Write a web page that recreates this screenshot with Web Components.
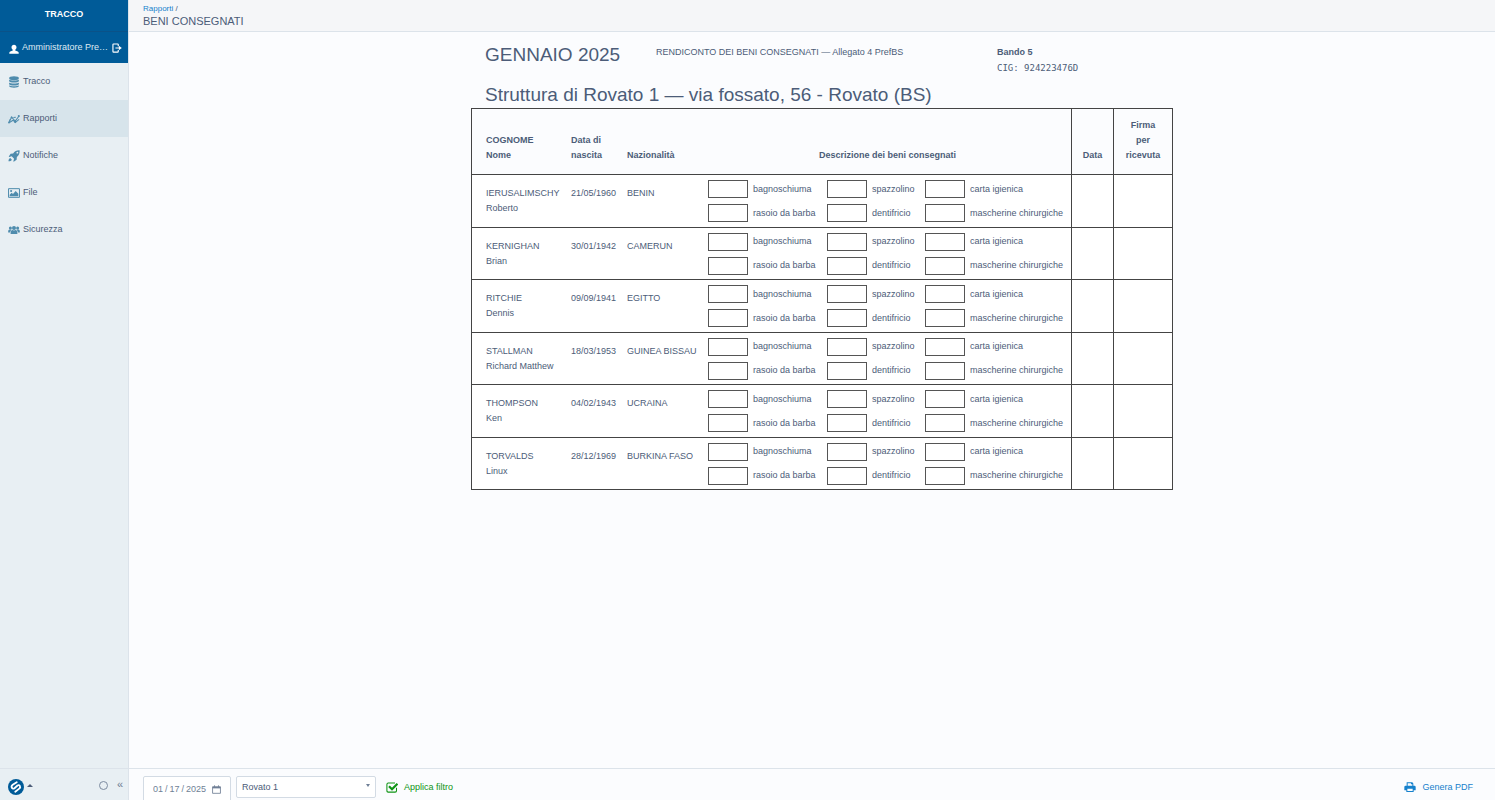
<!DOCTYPE html>
<html lang="it">
<head>
<meta charset="utf-8">
<meta name="viewport" content="width=device-width, initial-scale=1">
<title>Tracco - Beni consegnati</title>
<style>
html, body { height: 100%; margin: 0; }
body {
  --ink: #4c5c78; --line: #dce3ea; --link: #1681cc; --brand: #005b98; --icon: #4f8cad;
  font: 9px/15px "Liberation Sans", Arial, Helvetica, sans-serif;
  color: var(--ink); background: #fbfcfe; overflow: hidden;
}
</style>
</head>
<body>
<app-shell>
  <side-nav slot="nav" user="Amministratore Pre…">
    <nav-item icon="database">Tracco</nav-item>
    <nav-item icon="chart" active>Rapporti</nav-item>
    <nav-item icon="rocket">Notifiche</nav-item>
    <nav-item icon="picture">File</nav-item>
    <nav-item icon="group">Sicurezza</nav-item>
  </side-nav>
  <page-header slot="header" parent="Rapporti">BENI CONSEGNATI</page-header>
  <report-sheet></report-sheet>
  <filter-bar slot="footer"></filter-bar>
</app-shell>

<script>
const ICONS = {
  user: ['0 0 16 16', '<path fill="currentColor" d="M8 1c2.300 0 4 1.700 4 4.200 0 1.800-.8 3.200-2 4v1.200l4 1.600c.9.400 1.500 1 1.500 2V15.500H.5V14c0-1 .6-1.600 1.500-2l4-1.600V9.200c-1.200-.8-2-2.200-2-4C4 2.700 5.700 1 8 1z"/>'],
  logout: ['0 0 16 16', '<path fill="none" stroke="currentColor" stroke-width="1.800" d="M10 5V2.500Q10 1.500 9 1.500H2.500Q1.500 1.500 1.500 2.500v11Q1.500 14.500 2.500 14.500H9Q10 14.500 10 13.500V11M5.500 8H12"/><path fill="currentColor" d="M11 4.500 15.700 8 11 11.500z"/>'],
  database: ['0 0 16 16', '<g fill="currentColor"><ellipse cx="8" cy="3" rx="6.500" ry="2.600"/><path d="M1.500 4.700c1.500 1.700 11.500 1.700 13 0v1.800c0 3-13 3-13 0zM1.500 8.700c1.500 1.700 11.500 1.700 13 0v1.800c0 3-13 3-13 0zM1.500 12.400c1.500 1.700 11.500 1.700 13 0v.9c0 3-13 3-13 0z"/></g>'],
  chart: ['0 0 20 16', '<g fill="none" stroke="currentColor" stroke-width="1.700"><path d="M1.500 14 6 5l6 6.500 6.500-8.500"/><path d="M3 13.500 8.500 10l3.500 4 6.500-5.500M2 10.500l2-1.500M9 5.500l4-.5"/></g><g fill="currentColor"><circle cx="1.700" cy="13.800" r="1.600"/><circle cx="6" cy="5.300" r="1.600"/><circle cx="12" cy="12.500" r="1.800"/><circle cx="18" cy="3" r="1.700"/></g>'],
  rocket: ['0 0 16 16', '<path fill="currentColor" fill-rule="evenodd" d="M15.500.5c.2 4-1 6.500-3.700 8.800l-.3 3.700-3.800 2.500-.6-.6 1-3.300-3.200-3.200-3.300 1-.6-.6L3.500 5l3.300-.4C9 1.700 11.700.3 15.500.5zM12.500 2.400a1.200 1.200 0 1 0 0 2.400 1.200 1.200 0 0 0 0-2.400zM3 10.800 5.200 13c-.8 1.600-2.400 2-4.500 2 0-2.100.6-3.600 2.300-4.200z"/>'],
  picture: ['0 0 18 16', '<path fill="none" stroke="currentColor" stroke-width="1.500" d="M.8 1.500h16.400v13H.8z"/><path fill="currentColor" d="M2.500 12.800V10.500l3-3 2 2 4-4.500 4 4v3.800z"/><circle cx="4.700" cy="5" r="1.600" fill="currentColor"/>'],
  group: ['0 0 20 16', '<g fill="currentColor"><circle cx="4" cy="4.500" r="2.500"/><circle cx="16" cy="4.500" r="2.500"/><path d="M.3 12V9.500Q.5 7 2.500 7h3Q4.500 9 3.500 12zM19.700 12V9.500Q19.500 7 17.500 7h-3Q15.500 9 16.500 12z"/><circle cx="10" cy="4.800" r="3.400"/><path d="M4.300 14.500q0-6 3-6.500 2.700 1.500 5.400 0 3 .5 3 6.500z"/></g>'],
  logo: ['0 0 32 32', '<circle cx="16" cy="16" r="16" fill="#005b98"/><path fill="none" stroke="#fff" stroke-width="3.600" stroke-linecap="round" d="M17.500 6.500 9.500 11.500c-5 3.500-1 10 3.500 7l6-5.500c4-3 7.500 3 3.500 6.200L14.500 25.500"/>'],
  check: ['0 0 16 16', '<path fill="none" stroke="currentColor" stroke-width="1.400" d="M14 9v4q0 1.800-1.800 1.800H3Q1.200 14.800 1.200 13V4.500Q1.200 2.700 3 2.700h9"/><path fill="none" stroke="currentColor" stroke-width="3" d="m4 7 4 4 7.300-7.300"/>'],
  print: ['0 0 18 16', '<path fill="currentColor" fill-rule="evenodd" d="M4 6V1h8.500L14 2.800V6h1.500q2 0 2 2v5H14.500v2.500h-11V13H.5V8q0-2 2-2zM5.500 2.500V6h7V4h-2V2.500zM5 10.500V14h8v-3.500z"/>'],
  calendar: ['0 0 16 16', '<path fill="none" stroke="currentColor" stroke-width="1.500" d="M1 3.200h14v11.600H1zM4.500.5v3M11.500.5v3"/><path fill="currentColor" d="M1 3h14v3H1z"/>']
};

class BaseElement extends HTMLElement {
  constructor() { super(); this.attachShadow({ mode: 'open' }); }
  connectedCallback() { this.shadowRoot.innerHTML = this.render(); }
}

customElements.define('ui-icon', class extends BaseElement {
  render() {
    const [box, body] = ICONS[this.getAttribute('name')];
    return `<style>:host{display:inline-flex;flex:none;width:12px;height:12px}svg{width:100%;height:100%}</style>
      <svg viewBox="${box}" aria-hidden="true">${body}</svg>`;
  }
});

customElements.define('app-shell', class extends BaseElement {
  render() {
    return `<style>
      :host{display:grid;height:100vh;grid-template:32px minmax(0,1fr) 32px / 129px minmax(0,1fr)}
      ::slotted([slot=nav]){grid-row:1/4}
      main{overflow:auto}
    </style>
    <slot name="nav"></slot><slot name="header"></slot><main><slot></slot></main><slot name="footer"></slot>`;
  }
});

customElements.define('side-nav', class extends BaseElement {
  render() {
    return `<style>
      :host{display:flex;flex-direction:column;box-sizing:border-box;background:#e8eff3;border-right:1px solid var(--line)}
      .brand{height:31px;line-height:29px;background:var(--brand);color:#fff;text-align:center;font-weight:bold;border-bottom:1px solid #0a5288}
      .user{display:flex;align-items:center;height:31px;padding:0 5px 0 8px;background:var(--brand);color:#dfeaf2}
      .user ui-icon{color:#fff;height:10px;margin-top:3px}
      .user span{flex:1;margin-left:2px;white-space:nowrap}
      button{display:flex;padding:0;border:0;background:none;font:inherit;color:inherit}
      .user button ui-icon{margin:0}
      nav{flex:1}
      footer{display:flex;align-items:center;height:31px;border-top:1px solid var(--line);padding:0 5px 0 8px;gap:5px}
      footer .logo{align-items:center;gap:3px;margin-top:4px}
      .logo ui-icon{width:16px;height:16px}
      .caret{border:3px solid transparent;border-top:0;border-bottom-color:var(--ink);margin-bottom:3px}
      footer input{appearance:none;box-sizing:border-box;width:9px;height:9px;margin:2px 4px 0 auto;border:1px solid #7c8ba0;border-radius:50%}
      .fold{font-size:11px;color:#6c7b92}
    </style>
    <div class="brand">TRACCO</div>
    <div class="user"><ui-icon name="user"></ui-icon><span>${this.getAttribute('user')}</span>
      <button type="button" aria-label="Esci"><ui-icon name="logout"></ui-icon></button></div>
    <nav><slot></slot></nav>
    <footer>
      <button type="button" class="logo" aria-label="Menu"><ui-icon name="logo"></ui-icon><i class="caret"></i></button>
      <input type="radio" aria-label="Tema">
      <button type="button" class="fold">«</button>
    </footer>`;
  }
});

customElements.define('nav-item', class extends BaseElement {
  render() {
    return `<style>
      :host{display:block}
      :host([active]){background:#d7e4eb}
      a{display:flex;align-items:center;gap:3px;height:37px;padding-left:8px;color:inherit;text-decoration:none}
      ui-icon{color:var(--icon)}
    </style><a href="#"><ui-icon name="${this.getAttribute('icon')}"></ui-icon><slot></slot></a>`;
  }
});

customElements.define('page-header', class extends BaseElement {
  render() {
    return `<style>
      :host{display:block;box-sizing:border-box;padding:3px 14px 0;background:#f5f6f8;border-bottom:1px solid var(--line)}
      nav{font-size:8px;line-height:12px}
      a{color:var(--link);text-decoration:none}
      h1{margin:0;font-size:11px;line-height:13px;font-weight:normal}
    </style><nav><a href="#">${this.getAttribute('parent')}</a> /</nav><h1><slot></slot></h1>`;
  }
});

customElements.define('goods-field', class extends BaseElement {
  render() {
    return `<style>
      :host{display:block}
      label{display:flex;align-items:center;gap:5px;height:18px;white-space:nowrap}
      input{box-sizing:border-box;width:40px;height:18px;margin:0;padding:0 3px;border:1px solid #555;border-radius:0;background:#fff;font:inherit;color:inherit}
    </style><label><input type="text"><slot></slot></label>`;
  }
});

const PEOPLE = [
  ['IERUSALIMSCHY', 'Roberto', '21/05/1960', 'BENIN'],
  ['KERNIGHAN', 'Brian', '30/01/1942', 'CAMERUN'],
  ['RITCHIE', 'Dennis', '09/09/1941', 'EGITTO'],
  ['STALLMAN', 'Richard Matthew', '18/03/1953', 'GUINEA BISSAU'],
  ['THOMPSON', 'Ken', '04/02/1943', 'UCRAINA'],
  ['TORVALDS', 'Linux', '28/12/1969', 'BURKINA FASO']
];
const GOODS = ['bagnoschiuma', 'spazzolino', 'carta igienica', 'rasoio da barba', 'dentifricio', 'mascherine chirurgiche'];

customElements.define('report-sheet', class extends BaseElement {
  render() {
    const goods = GOODS.map(g => `<goods-field>${g}</goods-field>`).join('');
    const rows = PEOPLE.map(([last, first, born, nation]) => `<tr>
      <td>${last}<br>${first}</td><td>${born}</td><td>${nation}</td>
      <td class="goods"><div>${goods}</div></td><td></td><td></td></tr>`).join('');
    return `<style>
      :host{display:block;padding:11px 0 20px 20px}
      article{width:702px;margin:0 auto}
      header{display:grid;grid-template-columns:171px 341px 1fr;padding-left:14px;height:40px;line-height:16px}
      h1,h2{margin:0;font-size:19px;font-weight:normal;line-height:24px}
      h2{padding:0 0 1px 14px}
      p{margin:1px 0 0}
      code{display:block;font-family:"DejaVu Sans Mono",monospace}
      table{width:100%;height:382px;table-layout:fixed;border-collapse:separate;border-spacing:0;border:solid #444;border-width:1px 0 0 1px}
      th,td{padding:11px 0 0 5px;text-align:left;vertical-align:top;border-bottom:1px solid #444;white-space:nowrap}
      thead th{height:66px;box-sizing:border-box;padding:0 0 11px 5px;vertical-align:bottom}
      td:first-child,thead th:first-child{padding-left:14px}
      thead th:nth-child(n+4){text-align:center;padding-left:0}
      td:nth-child(n+4),th:nth-child(n+4){border-right:1px solid #444}
      tbody{background:#fff}
      td.goods{padding:5px 0 4px 4px}
      .goods div{display:grid;grid-template-columns:119px 98px 1fr;row-gap:6px}
    </style>
    <article>
      <header><h1>GENNAIO 2025</h1><p>RENDICONTO DEI BENI CONSEGNATI — Allegato 4 PrefBS</p>
        <p><strong>Bando 5</strong><code>CIG: 924223476D</code></p></header>
      <h2>Struttura di Rovato 1 — via fossato, 56 - Rovato (BS)</h2>
      <table>
        <colgroup><col style="width:94px"><col style="width:56px"><col style="width:82px"><col><col style="width:42px"><col style="width:59px"></colgroup>
        <thead><tr><th>COGNOME<br>Nome</th><th>Data di<br>nascita</th><th>Nazionalità</th>
          <th>Descrizione dei beni consegnati</th><th>Data</th><th>Firma<br>per<br>ricevuta</th></tr></thead>
        <tbody>${rows}</tbody>
      </table>
    </article>`;
  }
});

customElements.define('filter-bar', class extends BaseElement {
  render() {
    return `<style>
      :host{display:block;overflow:hidden;box-sizing:border-box;border-top:1px solid var(--line)}
      form{display:flex;align-items:flex-start;gap:5px;padding:7px 22px 0 14px}
      .date{display:flex;align-items:center;box-sizing:border-box;width:88px;height:26px;padding:0 9px;border:1px solid #d3dbe4;border-radius:2px;background:#fff;color:#6f7f96}
      .date input{flex:1;min-width:0;padding:0;border:0;background:none;font:inherit;color:inherit;outline:0}
      ::-webkit-calendar-picker-indicator{display:none}
      ::-webkit-datetime-edit-text{padding:0 2px}
      ::-webkit-datetime-edit-month-field,::-webkit-datetime-edit-day-field,::-webkit-datetime-edit-year-field{padding:0}
      .date ui-icon{width:9px;height:9px}
      .pick{position:relative;display:flex}
      select{appearance:none;width:140px;height:22px;padding:0 5px;border:1px solid #d3dbe4;border-radius:2px;background:#fff;font:inherit;color:inherit}
      .pick::after{content:"";position:absolute;right:6px;top:8px;border:2px solid transparent;border-top:3px solid #6f7f96;border-bottom:0}
      button{display:flex;align-items:center;gap:6px;height:22px;padding:0;border:0;background:none;font:inherit}
      .apply{margin-left:5px;color:#0f9415}
      .pdf{margin-left:auto;color:var(--link)}
    </style>
    <form>
      <label class="date"><input type="date" value="2025-01-17" aria-label="Data"><ui-icon name="calendar"></ui-icon></label>
      <span class="pick"><select aria-label="Struttura"><option>Rovato 1</option></select></span>
      <button type="button" class="apply"><ui-icon name="check"></ui-icon>Applica filtro</button>
      <button type="button" class="pdf"><ui-icon name="print"></ui-icon>Genera PDF</button>
    </form>`;
  }
});
</script>
</body>
</html>
